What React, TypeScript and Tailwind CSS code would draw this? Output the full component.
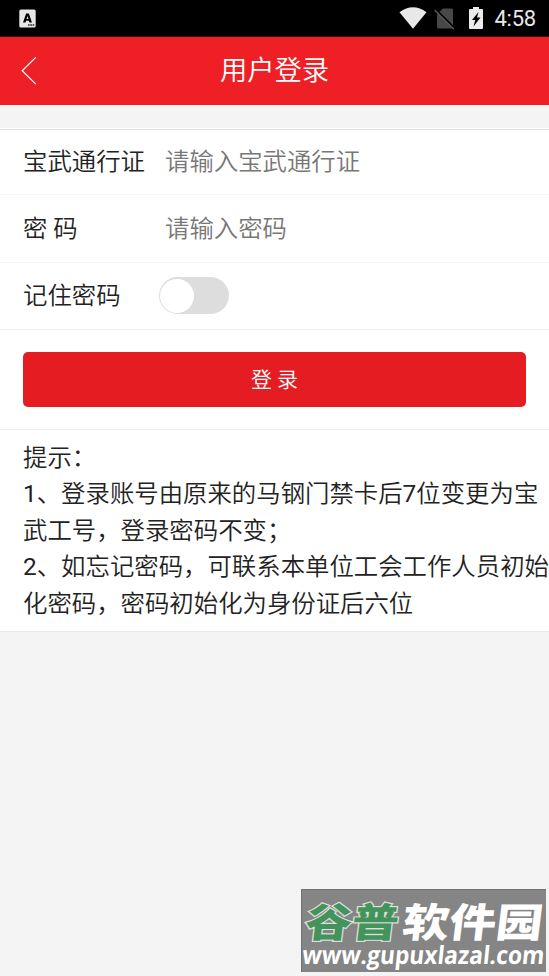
import { useState } from 'react';

const tips = [
  '1、登录账号由原来的马钢门禁卡后7位变更为宝',
  '武工号，登录密码不变；',
  '2、如忘记密码，可联系本单位工会工作人员初始',
  '化密码，密码初始化为身份证后六位',
];

function StatusBar() {
  return (
    <div className="flex h-[37px] items-center justify-between border-b border-[#3b0a0a] bg-black pl-[19px] pr-[13px] font-normal">
      <svg width="17" height="19" viewBox="0 0 17 19">
        <rect x="0.3" y="0.5" width="16.4" height="18" rx="1.5" fill="#e6e6e6" />
        <path d="M4 13.5 7.1 4.5h2.8l3 9h-2.5l-.5-1.8H7.1l-.6 1.8zM7.6 9.9h1.8l-.9-3z" fill="#000" />
        <path d="M9 15.3h1.6v1.5H9zM11.3 15.3h1.6v1.5h-1.6zM13.6 15.3h1.6v1.5h-1.6z" fill="#222" />
      </svg>
      <div className="flex items-center">
        <svg width="28" height="22" viewBox="0 0 28 22">
          <path d="M0.5 5.2Q14-4.7 27.5 5.2L14 21.7z" fill="#e8e8e8" />
        </svg>
        <svg className="ml-[7px]" width="22" height="23" viewBox="0 0 22 23">
          <path d="M9 1.5h8.5a1.5 1.5 0 0 1 1.5 1.5v17a1.5 1.5 0 0 1-1.5 1.5h-13A1.5 1.5 0 0 1 3 20V7.5z" fill="#484848" />
          <path d="M1.8 2.5 21 21.7" stroke="#000" strokeWidth="2" />
          <path d="M0.7 3.3 19.8 22.2" stroke="#555" strokeWidth="1.6" />
        </svg>
        <svg className="ml-[12px]" width="16" height="24" viewBox="0 0 16 24">
          <path d="M5 1h6v2h3q1 0 1 1v18q0 1-1 1H2q-1 0-1-1V4q0-1 1-1h3z" fill="#ececec" />
          <path d="M10.5 6 4 14h3.2L5.5 20.5 12.5 11.5H9z" fill="#000" />
        </svg>
        <span className="ml-[10px] pt-px text-[22px] leading-none tracking-[-0.2px] text-[#e8e8e8]">4:58</span>
      </div>
    </div>
  );
}

// Digits come from Roboto, which needs the regular weight next to the lighter CJK glyphs
function TipLine({ text }: { text: string }) {
  return (
    <p>
      {text.split(/(\d)/).map((part, i) => (/\d/.test(part) ? <span key={i} className="font-normal">{part}</span> : part))}
    </p>
  );
}

function Watermark() {
  return (
    <svg className="mb-1 mr-[3px] mt-auto self-end overflow-visible" width="245" height="83" viewBox="0 0 245 83">
      <rect width="245" height="83" fill="#858585" />
      <path d="M0.5 83V0.5H245" fill="none" stroke="#707070" />
      <g fontFamily="'Noto Sans CJK SC', sans-serif" fontWeight="900" fontSize="40" transform="translate(10 0) skewX(-7)">
        <text x="-1" y="48" textLength="93" lengthAdjust="spacingAndGlyphs" fill="#43945a" stroke="#dedede" strokeWidth="2.4" paintOrder="stroke">谷普</text>
        <text x="96" y="48" textLength="140" lengthAdjust="spacingAndGlyphs" fill="#fff">软件园</text>
      </g>
      <g transform="translate(8.5 0) skewX(-6)">
        <text x="0" y="75" textLength="242" lengthAdjust="spacingAndGlyphs" fontFamily="'Open Sans', sans-serif" fontWeight="700" fontSize="25" fill="#fff">www.gupuxlazal.com</text>
      </g>
    </svg>
  );
}

export default function App() {
  const [account, setAccount] = useState('');
  const [password, setPassword] = useState('');
  const [remember, setRemember] = useState(false);

  return (
    <div className="flex h-[976px] w-[549px] flex-col overflow-hidden bg-[#f4f4f4] font-[Roboto,'Noto_Sans_CJK_SC',sans-serif] text-[24.4px] font-[350] text-[#222]">
      <StatusBar />
      <header className="grid h-[68px] grid-cols-[60px_1fr_60px] items-center bg-[#ef1f26] text-white">
        <button className="pl-[21px]" aria-label="返回">
          <svg width="16" height="28" viewBox="0 0 16 28" fill="none" stroke="currentColor" strokeWidth="1.2">
            <path d="M14.8 0.4 1.2 13.8 14.8 27.1" />
          </svg>
        </button>
        <h1 className="pt-px text-center text-[27.3px] leading-[67px] font-[350]">用户登录</h1>
      </header>

      <form className="mt-[23px] bg-white pt-px" onSubmit={e => e.preventDefault()}>
        <label className="flex h-[66px] items-center border-b border-t border-b-[#f7f7f7] border-t-[#e3e3e3] pl-[23px]">
          <span className="w-[142px]">宝武通行证</span>
          <input className="w-[350px] outline-none placeholder:text-[#777]" placeholder="请输入宝武通行证" value={account} onChange={e => setAccount(e.target.value)} />
        </label>
        <label className="flex h-[68px] items-center border-b border-[#f7f7f7] pl-[23px] pt-[2px]">
          <span className="w-[142px]">密 码</span>
          <input type="password" className="w-[350px] outline-none placeholder:text-[#777]" placeholder="请输入密码" value={password} onChange={e => setPassword(e.target.value)} />
        </label>
        <div className="flex h-[67px] items-center border-b border-[#eee] pl-[23px]">
          <span className="w-[136px]">记住密码</span>
          <button type="button" role="switch" aria-checked={remember} onClick={() => setRemember(!remember)} className={`mb-px flex h-[37px] w-[70px] items-center rounded-full px-px ${remember ? 'justify-end bg-[#e51d23]' : 'bg-[#ddd]'}`}>
            <span className="size-[34px] rounded-full bg-white" />
          </button>
        </div>
        <div className="h-[100px] border-b border-[#eee] px-[23px] pt-[22px]">
          <button type="submit" className="h-[55px] w-full rounded-[5px] bg-[#e51d23] pt-[2px] text-[21px] text-white">登 录</button>
        </div>
      </form>

      <section className="h-[202px] whitespace-nowrap border-b border-[#ebebeb] bg-white pl-[23px] pt-[9.6px] leading-[36.6px]">
        <p>提示：</p>
        {tips.map(line => <TipLine key={line} text={line} />)}
      </section>

      <Watermark />
    </div>
  );
}
